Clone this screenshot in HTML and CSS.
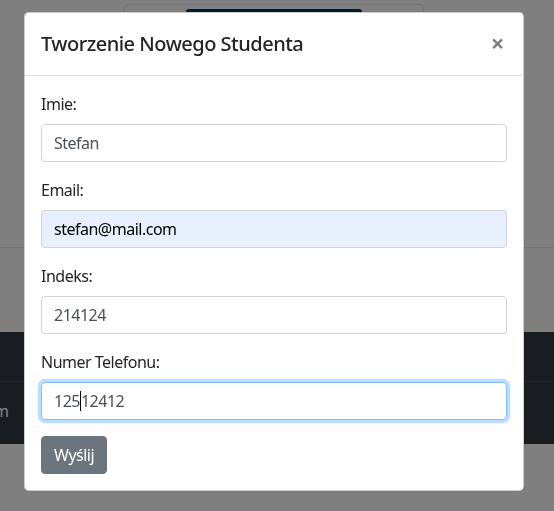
FILE: index.html
```html
<!DOCTYPE html>
<html lang="pl">
<head>
<meta charset="utf-8">
<title>Tworzenie Nowego Studenta</title>
<link rel="stylesheet" href="styles.css">
</head>
<body>
<div class="page">
  <div class="topbox"><div class="topbar"></div></div>
  <div class="spacer"></div>
  <div class="rule"></div>
  <div class="table-dark">
    <div class="trow"></div>
    <div class="trow"><span class="cell">m</span></div>
  </div>
</div>
<div class="backdrop"></div>
<div class="modal">
  <div class="modal-header">
    <h5 class="modal-title">Tworzenie Nowego Studenta</h5>
    <span class="close">&times;</span>
  </div>
  <form class="modal-body">
    <div class="form-group">
      <label class="label">Imie:</label>
      <input class="form-control" type="text" value="Stefan">
    </div>
    <div class="form-group">
      <label class="label">Email:</label>
      <input class="form-control autofill" type="text" value="stefan@mail.com">
    </div>
    <div class="form-group">
      <label class="label">Indeks:</label>
      <input class="form-control" type="text" value="214124">
    </div>
    <div class="form-group">
      <label class="label">Numer Telefonu:</label>
      <div class="form-control focused">125<span class="caret"></span>12412</div>
    </div>
    <button type="button" class="btn">Wyślij</button>
  </form>
</div>
</body>
</html>
```
FILE: styles.css
```css
* { box-sizing: border-box; }
html, body { margin: 0; padding: 0; }
body {
  width: 554px;
  height: 511px;
  overflow: hidden;
  background: #fff;
  font-family: "Segoe UI", "Noto Sans", "Open Sans", sans-serif;
  font-size: 16px;
  line-height: 1.5;
  letter-spacing: -0.5px;
  color: #212529;
}
.page { position: relative; height: 511px; }
.topbox {
  margin: 4px 0 0 124px;
  width: 300px;
  height: 40px;
  border: 1px solid #dee2e6;
  border-radius: 5px;
  padding: 4px 0 0 61px;
}
.topbar {
  width: 176px;
  height: 30px;
  background: #003466;
  border-radius: 3px 3px 0 0;
}
.spacer { height: 203px; }
.rule { height: 1px; background: #e5e5e5; }
.table-dark { margin-top: 84px; background: #343a40; }
.trow { height: 50px; border-bottom: 1px solid #454d55; }
.trow:last-child { height: 62px; border-bottom: 0; display: flex; align-items: center; padding-bottom: 4px; }
.cell { color: #fff; margin-left: -6px; font-size: 16px; }

.backdrop {
  position: fixed;
  inset: 0;
  background: #000;
  opacity: .5;
}
.modal {
  position: fixed;
  top: 12px;
  left: 24px;
  width: 500px;
  background: #fff;
  border: 1px solid rgba(0,0,0,.2);
  border-radius: 4.8px;
}
.modal-header {
  display: flex;
  align-items: flex-start;
  justify-content: space-between;
  padding: 16px;
  border-bottom: 1px solid #dee2e6;
}
.modal-title {
  margin: 0;
  font-size: 20px;
  font-weight: 500;
  line-height: 1.5;
}
.close {
  padding: 18px 19px 16px 16px;
  margin: -16px -16px -16px auto;
  font-size: 24px;
  font-weight: 700;
  line-height: 1;
  color: #000;
  opacity: .5;
  text-shadow: 0 1px 0 #fff;
}
.modal-body { display: block; padding: 16px; margin: 0; }
.form-group { margin-bottom: 16px; }
.label { display: block; margin-bottom: 8px; }
.form-control {
  display: block;
  width: 100%;
  height: 38px;
  padding: 6px 12px;
  font-family: inherit;
  font-size: 16px;
  line-height: 1.5;
  letter-spacing: -0.5px;
  color: #495057;
  background: #fff;
  border: 1px solid #ced4da;
  border-radius: 4px;
  margin: 0;
}
.form-control.autofill { background: #e8f0fe; color: #000; }
.form-control.focused {
  border-color: #80bdff;
  box-shadow: 0 0 0 3.2px rgba(0,123,255,.25);
}
.caret {
  display: inline-block;
  width: 1px;
  height: 20px;
  background: #000;
  vertical-align: -4px;
}
.btn {
  display: inline-block;
  height: 38px;
  padding: 6px 12px;
  font-family: inherit;
  font-size: 16px;
  line-height: 1.5;
  letter-spacing: -0.5px;
  color: #fff;
  background: #6c757d;
  border: 1px solid #6c757d;
  border-radius: 4px;
}
```
